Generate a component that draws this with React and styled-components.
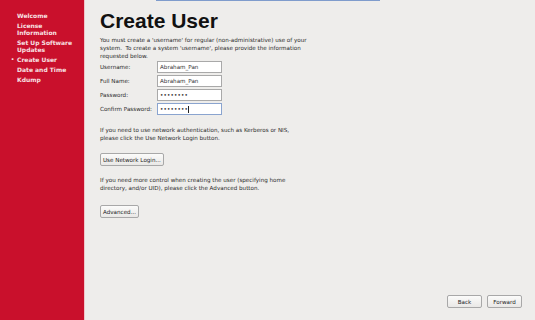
import styled, { createGlobalStyle } from "styled-components"

const Global = createGlobalStyle`
  html, body {
    margin: 0;
    padding: 0;
    background: #eeedeb;
  }
  body {
    font-family: "DejaVu Sans", "Liberation Sans", sans-serif;
  }
`

const Screen = styled.div`
  display: flex;
  width: 535px;
  height: 320px;
  overflow: hidden;
`

const Sidebar = styled.nav`
  width: 85px;
  flex: none;
  background: #c9102c;
  border-right: 1px solid #f0c4c9;
  padding: 12px 0 0 17px;
  box-sizing: border-box;
  display: flex;
  flex-direction: column;
  gap: 3px;
`

const Step = styled.div`
  position: relative;
  color: #f8e0e3;
  font-weight: bold;
  font-size: 6px;
  line-height: 7px;

  &::before {
    content: ${(p) => (p.$current ? '"•"' : "none")};
    position: absolute;
    left: -6px;
    top: 0;
    font-size: 5px;
  }
`

const Main = styled.main`
  flex: 1;
  display: flex;
  flex-direction: column;
  padding: 0 13px 12px 15px;
  color: #2a2a2a;
`

const FocusEdge = styled.div`
  height: 1px;
  width: 224px;
  margin-left: 56px;
  background: #7f9ccc;
`

const Title = styled.h1`
  margin: 9px 0 5px;
  font-family: "Liberation Sans", Arial, sans-serif;
  font-size: 21px;
  font-weight: bold;
  color: #111;
  line-height: 21px;
`

const Text = styled.p`
  margin: 0;
  font-size: 5.6px;
  line-height: 8px;
  white-space: nowrap;
`

const Form = styled.div`
  display: grid;
  grid-template-columns: 57px 65px;
  row-gap: 2px;
  align-items: center;
  margin: 1px 0 11px;
`

const Label = styled.label`
  font-size: 5.6px;
`

const Input = styled.div`
  height: 12px;
  box-sizing: border-box;
  border: 1px solid ${(p) => (p.$focus ? "#8aa4cf" : "#a9a9a9")};
  background: #fff;
  font-size: 5.6px;
  line-height: 10px;
  padding: 0 2px;
  color: #333;
  letter-spacing: ${(p) => (p.$secret ? "0.2px" : "0")};
`

const Caret = styled.span`
  display: inline-block;
  width: 1px;
  height: 7px;
  background: #222;
  vertical-align: middle;
`

const Button = styled.button`
  font-family: inherit;
  font-size: 5.6px;
  height: 13px;
  padding: 0 2px;
  border: 1px solid #a8a8a8;
  border-radius: 2px;
  background: linear-gradient(#fbfbfa, #e9e8e6);
  color: #222;
  width: ${(p) => p.$w || "auto"};
`

const ButtonRow = styled.div`
  display: flex;
  margin: ${(p) => p.$m};
`

const Spacer = styled.div`
  flex: 1;
`

const Footer = styled.div`
  display: flex;
  justify-content: flex-end;
  gap: 5px;
`

export default function App() {
  return (
    <Screen>
      <Global />
      <Sidebar>
        <Step>Welcome</Step>
        <Step>License<br />Information</Step>
        <Step>Set Up Software<br />Updates</Step>
        <Step $current>Create User</Step>
        <Step>Date and Time</Step>
        <Step>Kdump</Step>
      </Sidebar>
      <Main>
        <FocusEdge />
        <Title>Create User</Title>
        <Text>
          You must create a 'username' for regular (non-administrative) use of your
          <br />
          system.&nbsp; To create a system 'username', please provide the information
          <br />
          requested below.
        </Text>
        <Form>
          <Label>Username:</Label>
          <Input>Abraham_Pan</Input>
          <Label>Full Name:</Label>
          <Input>Abraham_Pan</Input>
          <Label>Password:</Label>
          <Input $secret>••••••••</Input>
          <Label>Confirm Password:</Label>
          <Input $secret $focus>••••••••<Caret /></Input>
        </Form>
        <Text>
          If you need to use network authentication, such as Kerberos or NIS,
          <br />
          please click the Use Network Login button.
        </Text>
        <ButtonRow $m="11px 0 10px">
          <Button>Use Network Login...</Button>
        </ButtonRow>
        <Text>
          If you need more control when creating the user (specifying home
          <br />
          directory, and/or UID), please click the Advanced button.
        </Text>
        <ButtonRow $m="13px 0 0">
          <Button>Advanced...</Button>
        </ButtonRow>
        <Spacer />
        <Footer>
          <Button $w="35px">Back</Button>
          <Button $w="35px">Forward</Button>
        </Footer>
      </Main>
    </Screen>
  )
}
